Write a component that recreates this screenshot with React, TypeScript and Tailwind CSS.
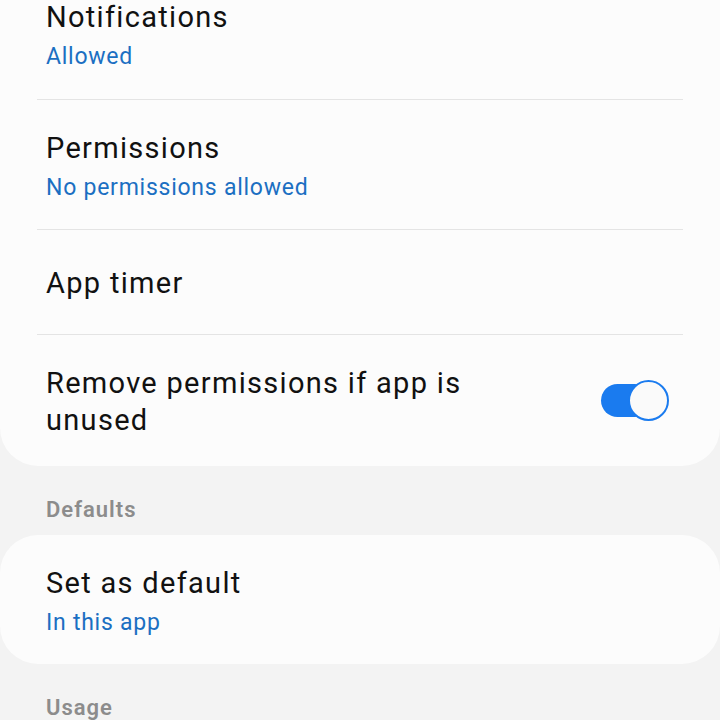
import React from "react";

const font = { fontFamily: "Roboto, 'Noto Sans', sans-serif" };

function Row({ title, sub, last, h, children }: { title: React.ReactNode; sub?: string; last?: boolean; h: string; children?: React.ReactNode }) {
  return (
    <div className={`${h} flex items-center justify-between pt-[3px] pl-[9px] pr-[14px] ${last ? "" : "border-b border-[#e4e4e4]"}`}>
      <div className="flex flex-col">
        <div className="text-[29px] leading-[37px] tracking-[1.3px] text-[#111111]">{title}</div>
        {sub && <div className="mt-[6px] text-[23px] leading-[30px] tracking-[0.75px] text-[#1b6fc2]">{sub}</div>}
      </div>
      {children}
    </div>
  );
}

function Toggle() {
  return (
    <div className="relative w-[68px] h-[41px] flex items-center -mt-[3px]">
      <div className="w-[50px] h-[33px] rounded-full bg-[#1a7bef]" />
      <div className="absolute right-0 top-0 w-[41px] h-[41px] rounded-full bg-[#fafafa] border-[2px] border-[#1a7bef]" />
    </div>
  );
}

export default function App() {
  return (
    <div className="w-[720px] h-[720px] overflow-hidden bg-[#f3f3f3]" style={font}>
      <div className="-mt-[31px] bg-[#fcfcfc] rounded-b-[38px] px-[37px]">
        <Row h="h-[131px]" title="Notifications" sub="Allowed" />
        <Row h="h-[130px]" title="Permissions" sub="No permissions allowed" />
        <Row h="h-[105px]" title="App timer" />
        <Row h="h-[131px]" last title={<>Remove permissions if app is<br />unused</>}>
          <Toggle />
        </Row>
      </div>
      <div className="h-[69px] pt-[29px] pl-[46px] text-[22px] leading-[30px] tracking-[1px] font-semibold text-[#8c8c8c]">Defaults</div>
      <div className="bg-[#fcfcfc] rounded-[38px] px-[37px]">
        <Row h="h-[129px]" last title="Set as default" sub="In this app" />
      </div>
      <div className="h-[69px] pt-[29px] pl-[46px] text-[22px] leading-[30px] tracking-[1px] font-semibold text-[#8c8c8c]">Usage</div>
    </div>
  );
}
